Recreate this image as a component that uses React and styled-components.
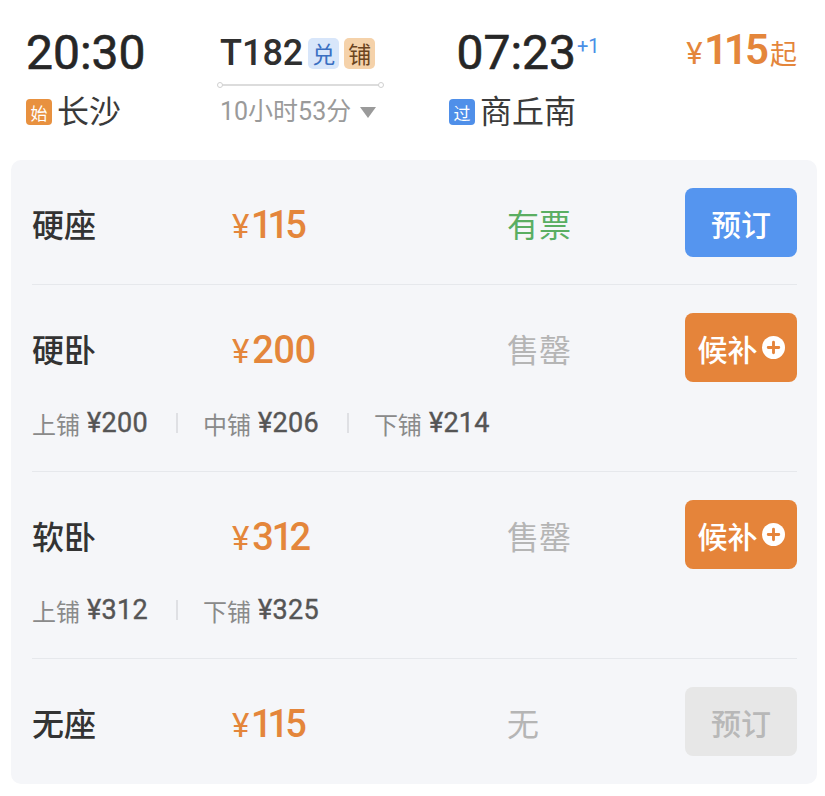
import React from 'react'
import styled, { createGlobalStyle } from 'styled-components'

const GlobalStyle = createGlobalStyle`
  body {
    margin: 0;
    background: #fff;
    font-family: Roboto, "Noto Sans CJK SC", sans-serif;
  }
`

const Page = styled.div`
  width: 825px;
`

const Header = styled.div`
  display: grid;
  grid-template-columns: 194px 226px 130px 1fr;
  padding: 29px 28px 0 26px;
`

const Col = styled.div`
  display: flex;
  flex-direction: column;
  align-items: ${({ $align }) => $align || 'flex-start'};
`

const TimeRow = styled.div`
  position: relative;
  height: 48px;
  display: flex;
  align-items: center;
`

const Time = styled.span`
  font-size: 48px;
  line-height: 48px;
  font-weight: 400;
  color: #262626;
  -webkit-text-stroke: 0.6px #262626;
`

const NextDay = styled.span`
  position: absolute;
  left: calc(100% + 1px);
  top: 7px;
  font-size: 20px;
  line-height: 20px;
  color: #4a8fe6;
`

const Station = styled.div`
  display: flex;
  align-items: center;
  gap: 5px;
  margin-top: 19px;
`

const StationTag = styled.span`
  width: 26px;
  height: 26px;
  border-radius: 4px;
  background: ${({ $bg }) => $bg};
  color: #fff;
  font-size: 17px;
  display: flex;
  align-items: center;
  justify-content: center;
`

const StationName = styled.span`
  font-size: 32px;
  line-height: 32px;
  color: #3a3a3a;
`

const TrainRow = styled.div`
  height: 48px;
  display: flex;
  align-items: center;
  gap: 5px;
`

const TrainNo = styled.span`
  font-size: 36px;
  font-weight: 500;
  color: #2f2f2f;
`

const TrainTag = styled.span`
  width: 31px;
  height: 31px;
  border-radius: 5px;
  background: ${({ $bg }) => $bg};
  color: ${({ $color }) => $color};
  font-size: 23px;
  display: flex;
  align-items: center;
  justify-content: center;
`

const Track = styled.div`
  position: relative;
  width: 161px;
  height: 2px;
  margin-top: 7px;
  background: #dcdcdc;
  &::before,
  &::after {
    content: '';
    position: absolute;
    top: -2px;
    width: 4px;
    height: 4px;
    border-radius: 50%;
    border: 1px solid #d0d0d0;
    background: #fff;
  }
  &::before { left: -3px; }
  &::after { right: -3px; }
`

const Duration = styled.div`
  display: flex;
  align-items: center;
  gap: 9px;
  margin-top: 12px;
  font-size: 25px;
  line-height: 28px;
  color: #9a9a9a;
`

const FromPrice = styled.div`
  line-height: 48px;
  color: #e4863b;
`

const Yen = styled.span`
  font-size: ${({ $size }) => $size}px;
  margin-right: 3px;
`

const Amount = styled.span`
  font-size: ${({ $size }) => $size}px;
  font-weight: ${({ $weight }) => $weight || 500};
  font-variant-numeric: proportional-nums;
  letter-spacing: ${({ $tight }) => ($tight ? '-1px' : '0')};
  line-height: 1;
`

const Qi = styled.span`
  font-size: 27px;
  margin-left: 1px;
`

const Panel = styled.div`
  margin: 32px 8px 13px 11px;
  padding: 0 20px 0 21px;
  background: #f5f6f9;
  border-radius: 10px;
`

const Row = styled.div`
  padding: 28px 0 27px;
  border-bottom: 1px solid #e6e8ec;
  &:last-child {
    border-bottom: none;
    padding-bottom: 28px;
  }
`

const Main = styled.div`
  display: grid;
  grid-template-columns: 200px 275px 1fr 112px;
  align-items: center;
  height: 69px;
`

const SeatName = styled.span`
  font-size: 32px;
  font-weight: 500;
  color: #333;
`

const SeatPrice = styled.span`
  display: flex;
  align-items: baseline;
  margin-top: 7px;
  color: #e4863b;
`

const Status = styled.span`
  font-size: 32px;
  color: ${({ $ok }) => ($ok ? '#5aae62' : '#b5b5b5')};
`

const buttonColors = {
  book: { bg: '#5595ef', fg: '#fff' },
  wait: { bg: '#e5843a', fg: '#fff' },
  off: { bg: '#e7e7e7', fg: '#b8b8b8' },
}

const Button = styled.button`
  width: 112px;
  height: 69px;
  border: none;
  border-radius: 8px;
  background: ${({ $kind }) => buttonColors[$kind].bg};
  color: ${({ $kind }) => buttonColors[$kind].fg};
  font-family: inherit;
  font-size: 30px;
  font-weight: 500;
  display: flex;
  align-items: center;
  justify-content: center;
  gap: 4px;
  padding: 0;
`

const Berths = styled.div`
  display: flex;
  align-items: center;
  margin-top: 28px;
  height: 26px;
  padding-bottom: 8px;
`

const BerthName = styled.span`
  font-size: 24px;
  color: #8a8a8a;
`

const BerthPrice = styled.span`
  font-size: 27px;
  color: #555;
  letter-spacing: 0.3px;
  -webkit-text-stroke: 0.4px #555;
  margin-left: 7px;
`

const Sep = styled.span`
  width: 2px;
  height: 20px;
  margin: 0 25px 0 28px;
  background: #dfe0e4;
`

const PlusCircle = () => (
  <svg width="23" height="23" viewBox="0 0 24 24">
    <circle cx="12" cy="12" r="12" fill="#fff" />
    <path d="M12 6.5v11M6.5 12h11" stroke="#e5843a" strokeWidth="3" strokeLinecap="round" />
  </svg>
)

const Caret = () => (
  <svg width="16" height="11" viewBox="0 0 16 11">
    <path d="M0 0h16L8 11z" fill="#9a9a9a" />
  </svg>
)

const seats = [
  { name: '硬座', price: 115, status: '有票', ok: true, kind: 'book' },
  {
    name: '硬卧', price: 200, status: '售罄', kind: 'wait',
    berths: [['上铺', 200], ['中铺', 206], ['下铺', 214]],
  },
  {
    name: '软卧', price: 312, status: '售罄', kind: 'wait',
    berths: [['上铺', 312], ['下铺', 325]],
  },
  { name: '无座', price: 115, status: '无', kind: 'off' },
]

function App() {
  return (
    <Page>
      <GlobalStyle />
      <Header>
        <Col>
          <TimeRow><Time>20:30</Time></TimeRow>
          <Station>
            <StationTag $bg="#e8913f">始</StationTag>
            <StationName>长沙</StationName>
          </Station>
        </Col>
        <Col>
          <TrainRow>
            <TrainNo>T182</TrainNo>
            <TrainTag $bg="#d8e6fa" $color="#3a6fc2">兑</TrainTag>
            <TrainTag $bg="#f5d2aa" $color="#6b4420">铺</TrainTag>
          </TrainRow>
          <Track />
          <Duration>10小时53分<Caret /></Duration>
        </Col>
        <Col $align="flex-end">
          <TimeRow><Time>07:23</Time><NextDay>+1</NextDay></TimeRow>
          <Station>
            <StationTag $bg="#4f8fe9">过</StationTag>
            <StationName>商丘南</StationName>
          </Station>
        </Col>
        <Col $align="flex-end">
          <FromPrice>
            <Yen $size={31}>¥</Yen>
            <Amount $size={42} $weight={600}>115</Amount>
            <Qi>起</Qi>
          </FromPrice>
        </Col>
      </Header>

      <Panel>
        {seats.map((s) => (
          <Row key={s.name}>
            <Main>
              <SeatName>{s.name}</SeatName>
              <SeatPrice>
                <Yen $size={33}>¥</Yen>
                <Amount $size={38} $tight>{s.price}</Amount>
              </SeatPrice>
              <Status $ok={s.ok}>{s.status}</Status>
              <Button $kind={s.kind}>
                {s.kind === 'wait' ? <>候补<PlusCircle /></> : '预订'}
              </Button>
            </Main>
            {s.berths && (
              <Berths>
                {s.berths.map(([label, p], i) => (
                  <React.Fragment key={label}>
                    {i > 0 && <Sep />}
                    <BerthName>{label}</BerthName>
                    <BerthPrice>¥{p}</BerthPrice>
                  </React.Fragment>
                ))}
              </Berths>
            )}
          </Row>
        ))}
      </Panel>
    </Page>
  )
}

export default App
